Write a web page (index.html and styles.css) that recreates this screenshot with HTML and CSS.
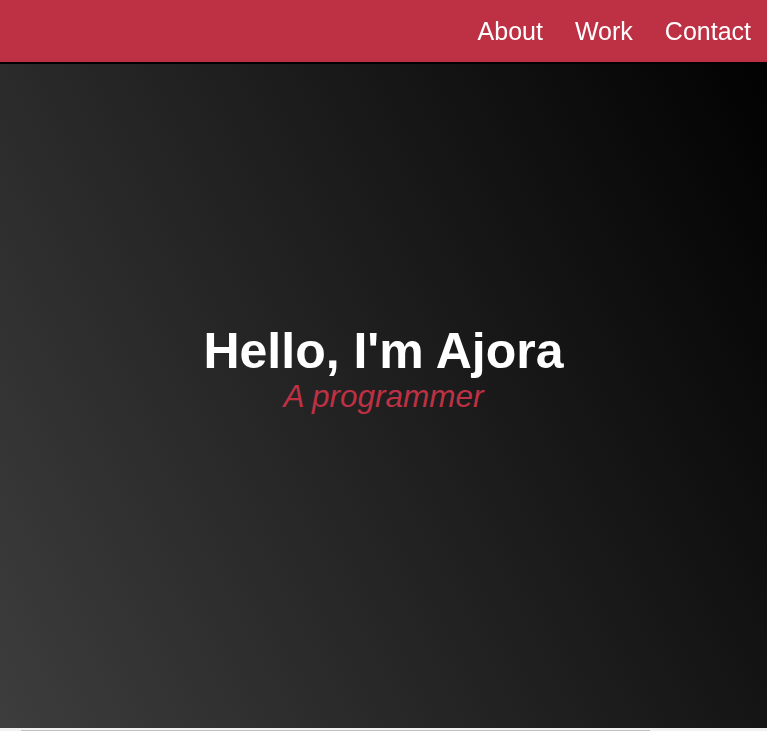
FILE: index.html
```html
<!DOCTYPE html>
<html lang="en">
<head>
<meta charset="utf-8">
<title>Ajora</title>
<link rel="stylesheet" href="styles.css">
</head>
<body>
<nav class="navbar">
  <ul class="nav-list">
    <li><a class="nav-link" href="#about">About</a></li>
    <li><a class="nav-link" href="#work">Work</a></li>
    <li><a class="nav-link" href="#contact">Contact</a></li>
  </ul>
</nav>
<section class="welcome">
  <h1 class="title">Hello, I'm Ajora</h1>
  <p class="subtitle">A programmer</p>
</section>
<div class="scroll-track"><div class="scroll-thumb"></div></div>
</body>
</html>
```
FILE: styles.css
```css
* { box-sizing: border-box; }
html, body {
  margin: 0;
  padding: 0;
}
body {
  font-family: "Liberation Sans", Arial, sans-serif;
  background: #f1f1f1;
  overflow: hidden;
}
.navbar {
  position: fixed;
  top: 0;
  left: 0;
  right: 0;
  height: 62px;
  background: #be3144;
  box-shadow: 0 2px 0 #000;
  display: flex;
  justify-content: flex-end;
  align-items: center;
  z-index: 2;
}
.nav-list {
  list-style: none;
  margin: 0;
  padding: 0;
  display: flex;
}
.nav-link {
  display: block;
  padding: 0 16px;
  color: #fff;
  text-decoration: none;
  font-size: 25px;
}
.welcome {
  height: 728px;
  padding-top: 6px;
  display: flex;
  flex-direction: column;
  justify-content: center;
  align-items: center;
  background-color: #000;
  background-image: linear-gradient(62deg, #3d3d3d 0%, #000 100%);
  color: #fff;
  text-align: center;
}
.title {
  margin: 0;
  font-size: 50px;
  font-weight: 700;
  line-height: normal;
}
.subtitle {
  margin: 0;
  font-size: 31.5px;
  font-style: italic;
  color: #be3144;
  line-height: 32px;
}
.scroll-track {
  height: 3px;
  background: #f1f1f1;
  padding-top: 2px;
}
.scroll-thumb {
  margin-left: 21px;
  width: 629px;
  height: 1px;
  background: #c1c1c1;
}
```
